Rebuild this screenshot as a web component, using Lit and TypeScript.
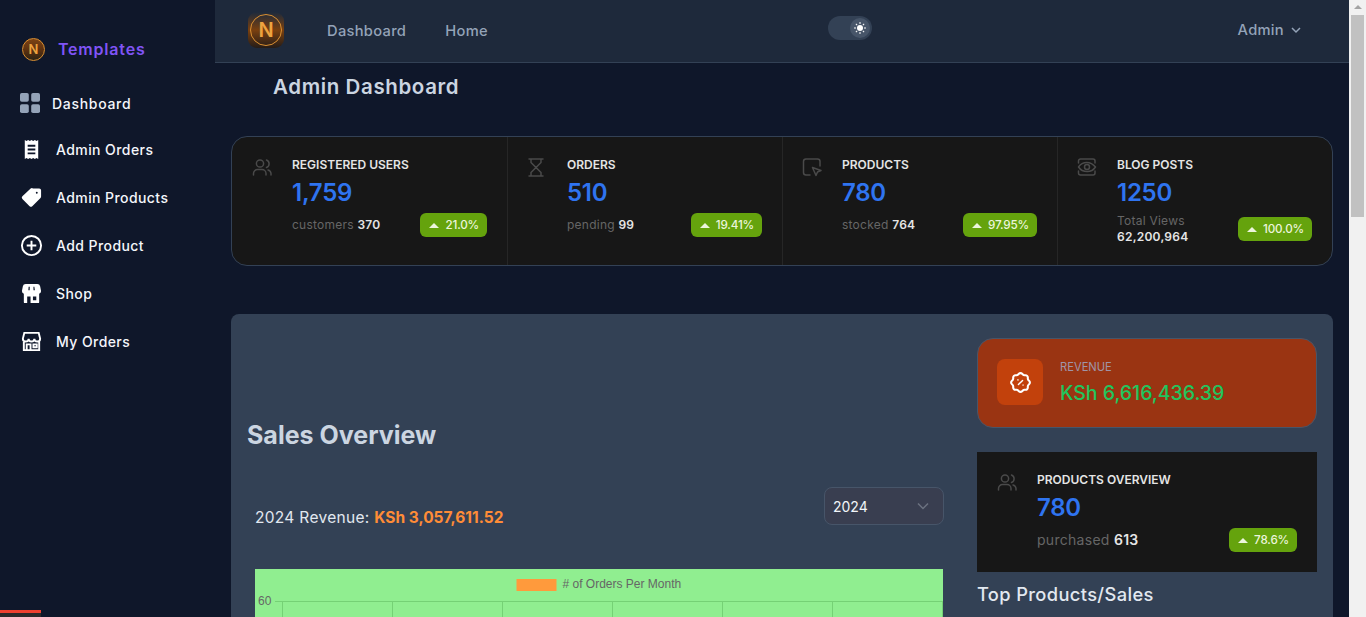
import { LitElement, css, html, svg } from 'lit';
import { customElement } from 'lit/decorators.js';

const icons = {
  grid: svg`<rect x="0" y="0" width="8.800" height="8.800" rx="1.800"/><rect x="11.200" y="0" width="8.800" height="8.800" rx="1.800"/><rect x="0" y="11.200" width="8.800" height="8.800" rx="1.800"/><rect x="11.200" y="11.200" width="8.800" height="8.800" rx="1.800"/>`,
  users: svg`<circle cx="10" cy="7.500" r="3.600"/><path d="M3.500 19v-1.500a4 4 0 0 1 4-4h4.500a4 4 0 0 1 4 4V19"/><path d="M16.500 4a4 4 0 0 1 0 7.500"/><path d="M21 19v-1.500a4 4 0 0 0-3-3.500"/>`,
  hourglass: svg`<path d="M4 3h14M4 20h14M6 3v3.500l5 5-5 5V20M16 3v3.500l-5 5 5 5V20"/>`,
  cursor: svg`<path d="M10 19H6a2.500 2.500 0 0 1-2.500-2.500V5.500A2.500 2.500 0 0 1 6 3h11.500A2.500 2.500 0 0 1 20 5.500V10"/><path d="M12.500 11.500l8.500 3-3.500 1.500-1.500 3.500z"/>`,
  eye: svg`<path d="M3.500 7V5a2 2 0 0 1 2-2h12.500a2 2 0 0 1 2 2v2M3.500 15v2a2 2 0 0 0 2 2h12.500a2 2 0 0 0 2-2v-2"/><path d="M3.500 11c2-3 4.800-4.500 8.250-4.500S18 8 20.500 11c-2 3-4.800 4.500-8.250 4.500S5.500 14 3.500 11z"/><circle cx="12" cy="11" r="2.500"/>`,
  rosette: svg`<path stroke-width="1.400" d="M10 14l4-4"/><circle stroke-width="1.400" cx="9.500" cy="9.500" r=".2"/><circle stroke-width="1.400" cx="14.500" cy="14.500" r=".2"/><path d="M5 7.200a2.200 2.200 0 0 1 2.200-2.200h1a2.200 2.200 0 0 0 1.550-.640l.700-.700a2.200 2.200 0 0 1 3.120 0l.700.700c.412.410.970.640 1.550.640h1a2.200 2.200 0 0 1 2.200 2.200v1c0 .580.230 1.138.640 1.550l.700.700a2.200 2.200 0 0 1 0 3.120l-.700.700a2.200 2.200 0 0 0-.640 1.550v1a2.200 2.200 0 0 1-2.200 2.200h-1a2.200 2.200 0 0 0-1.550.640l-.700.700a2.200 2.200 0 0 1-3.120 0l-.700-.700a2.200 2.200 0 0 0-1.550-.640h-1a2.200 2.200 0 0 1-2.200-2.200v-1a2.200 2.200 0 0 0-.640-1.550l-.700-.700a2.200 2.200 0 0 1 0-3.120l.700-.700a2.200 2.200 0 0 0 .640-1.550v-1"/>`,
};

const menu = [
  { label: 'Admin Orders', h: 46, icon: svg`<path fill="#fff" fill-rule="evenodd" d="M5 2l1.750 1.200L8.500 2l1.750 1.200L12 2l1.750 1.200L15.500 2l1.750 1.200L19 2v20l-1.750-1.200L15.500 22l-1.750-1.200L12 22l-1.750-1.200L8.500 22l-1.750-1.200L5 22V2zm3 5v2h8V7H8zm0 4v2h8v-2H8zm0 4v2h8v-2H8z"/>` },
  { label: 'Admin Products', h: 50, icon: svg`<path fill="#fff" fill-rule="evenodd" d="M13.500 2.500h6.500a2 2 0 0 1 2 2v6.500a2 2 0 0 1-.6 1.400l-8.600 8.600a2 2 0 0 1-2.800 0l-7.500-7.500a2 2 0 0 1 0-2.800l8.600-8.100a2 2 0 0 1 1.400-.600zM17.500 6a1 1 0 1 0 0 2 1 1 0 0 0 0-2z"/>` },
  { label: 'Add Product', h: 46, icon: svg`<circle cx="12" cy="12" r="10" fill="none" stroke="#fff" stroke-width="2"/><path d="M12 7v10M7 12h10" fill="none" stroke="#fff" stroke-width="2"/>` },
  { label: 'Shop', h: 50, icon: svg`<path fill="#fff" fill-rule="evenodd" d="M6 2h12a3 3 0 0 1 3 2.500l1 5a3 3 0 0 1-2 2.800V21a1 1 0 0 1-1 1H5a1 1 0 0 1-1-1v-8.700a3 3 0 0 1-2-2.800l1-5A3 3 0 0 1 6 2zm3 3l-.3 3.500h1.400L10.200 5H9zm5 0l.1 3.500h1.400L15 5h-1zM13.500 15v4H17v-4h-3.500zM7.500 15v7H11v-7H7.500z"/>` },
  { label: 'My Orders', h: 46, icon: svg`<path fill="none" stroke="#fff" stroke-width="2" d="M3 21h18M4 21V11M20 21V11M3 9l1.500-6h15L21 9a3 3 0 0 1-6 0 3 3 0 0 1-6 0 3 3 0 0 1-6 0zM7 21v-6h4v6M14 15h3.500v3H14z"/>` },
];

const stats = [
  { icon: icons.users, title: 'REGISTERED USERS', value: '1,759', desc: 'customers', count: '370', pct: '21.0%' },
  { icon: icons.hourglass, title: 'ORDERS', value: '510', desc: 'pending', count: '99', pct: '19.41%' },
  { icon: icons.cursor, title: 'PRODUCTS', value: '780', desc: 'stocked', count: '764', pct: '97.95%' },
  { icon: icons.eye, title: 'BLOG POSTS', value: '1250', desc: 'Total Views', count: '62,200,964', pct: '100.0%', stacked: true },
];

const gridXs = [27.5, 137.5, 247.5, 357.5, 467.5, 577.5, 687.5];

@customElement('app-root')
export class AppRoot extends LitElement {
  static styles = css`
    :host {
      display: flex;
      height: 100vh;
      overflow: hidden;
      font-family: Inter, 'Open Sans', sans-serif;
      color: #fff;
    }

    .page {
      display: flex;
      flex: 1;
      min-width: 0;
      background: #0f172a;
    }

    .rail {
      flex: 0 0 17px;
      background: #f1f1f1;
    }

    .rail-arrow {
      width: 0;
      height: 0;
      margin: 5px auto 6px;
      border-left: 4.500px solid transparent;
      border-right: 4.500px solid transparent;
      border-bottom: 4px solid #a3a3a3;
    }

    .rail-thumb {
      width: 13px;
      height: 202px;
      margin: 0 auto;
      background: #c1c1c1;
    }

    aside {
      position: relative;
      flex: 0 0 215px;
      background: #0f172a;
    }

    .brand {
      display: flex;
      align-items: center;
      gap: 13px;
      padding: 37px 0 0 22px;
      height: 24px;
      font-size: 16px;
      font-weight: 600;
      letter-spacing: 0.05em;
      color: #8054f5;
    }

    .coin {
      display: flex;
      align-items: center;
      justify-content: center;
      flex: none;
      box-sizing: border-box;
      border-radius: 50%;
      border: 1px solid #d98f32;
      background: linear-gradient(#7d4314, #5a3010 55%, #2e2414);
      color: #eda33f;
      font-weight: 600;
      letter-spacing: 0;
    }

    .coin.small {
      width: 23px;
      height: 23px;
      font-size: 13px;
    }

    .side-dash {
      display: flex;
      align-items: center;
      gap: 12px;
      margin: 30px 0 0 20px;
      height: 24px;
      font-size: 14px;
      font-weight: 500;
      letter-spacing: 0.05em;
      color: #f4f6fb;
    }

    .side-dash svg {
      fill: #94a3b8;
    }

    .side-list {
      margin: 11px 0 0;
      padding: 0;
      list-style: none;
    }

    .side-list li {
      display: flex;
      align-items: center;
      gap: 13px;
      padding-left: 20px;
      font-size: 14px;
      font-weight: 500;
      letter-spacing: 0.03em;
      color: #f4f6fb;
    }

    .toast-bar {
      position: absolute;
      left: 0;
      bottom: 0;
      width: 41px;
      height: 7px;
      background: #2b2b2b;
      border-top: 3px solid #ef4130;
      box-sizing: border-box;
    }

    main {
      flex: 1;
      min-width: 0;
    }

    .topbar {
      display: flex;
      align-items: center;
      box-sizing: border-box;
      height: 63px;
      padding: 0 33px;
      background: #1e293b;
      border-bottom: 1px solid #334155;
    }

    .logo-tile {
      display: flex;
      align-items: center;
      justify-content: center;
      width: 36px;
      height: 36px;
      border-radius: 9px;
      background: linear-gradient(#1d2a3c, #7a400f 50%, #241c18);
      margin-bottom: 3px;
    }

    .coin.large {
      width: 32px;
      height: 32px;
      background: none;
      font-size: 20px;
    }

    .nav {
      display: flex;
      gap: 39px;
      margin: 0 0 0 43px;
      font-size: 14.700px;
      font-weight: 500;
      letter-spacing: 0.02em;
      color: #94a3b8;
    }

    .toggle {
      position: relative;
      width: 44px;
      height: 24px;
      margin: 0 0 6px 340px;
      border-radius: 12px;
      background: #334155;
    }

    .knob {
      position: absolute;
      top: 2px;
      right: 2px;
      display: flex;
      align-items: center;
      justify-content: center;
      width: 20px;
      height: 20px;
      border-radius: 50%;
      background: #475569;
      color: #fff;
    }

    .account {
      display: flex;
      align-items: center;
      gap: 7px;
      margin: 0 15px 3px auto;
      font-size: 14.700px;
      font-weight: 500;
      letter-spacing: 0.02em;
      color: #94a3b8;
    }

    .page-title {
      margin: 0;
      padding: 10px 0 0 58px;
      height: 30px;
      font-size: 20.500px;
      line-height: 28px;
      font-weight: 600;
      letter-spacing: 0.03em;
      color: #cbd5e1;
    }

    .content {
      padding: 33px 16px 0;
    }

    .stats {
      display: grid;
      grid-template-columns: repeat(4, 1fr);
      height: 130px;
      box-sizing: border-box;
      border: 1px solid #334155;
      border-radius: 16px;
      background: #171717;
      overflow: hidden;
    }

    .stat {
      display: flex;
      gap: 16px;
      box-sizing: border-box;
      padding: 20px 20px 0 19px;
      border-left: 1px solid #262626;
    }

    .stat:first-child {
      padding-left: 20px;
      border-left: 0;
    }

    .stat-icon {
      flex: none;
      width: 24px;
      height: 24px;
      margin: -1px 2px 0 -2px;
      fill: none;
      stroke: #4a4a4a;
      stroke-width: 1.500;
      stroke-linecap: round;
      stroke-linejoin: round;
    }

    .stat-body {
      flex: 1;
      min-width: 0;
    }

    .stat-title {
      font-size: 12px;
      line-height: 16px;
      font-weight: 600;
      color: #e5e5e5;
    }

    .stat-value {
      margin-top: 4px;
      font-size: 24px;
      line-height: 32px;
      font-weight: 600;
      letter-spacing: -0.01em;
      color: #2f74f0;
    }

    .stat-row {
      display: flex;
      align-items: center;
      justify-content: space-between;
      margin-top: 4px;
    }

    .stat-desc {
      font-size: 12px;
      line-height: 16px;
      letter-spacing: 0.02em;
      color: #666;
    }

    .stat-desc b {
      font-weight: 600;
      color: #e5e5e5;
    }

    .stat-desc b.own-line {
      display: block;
    }

    .badge {
      display: inline-flex;
      align-items: center;
      gap: 6px;
      height: 24px;
      padding: 0 8px 0 9px;
      border-radius: 6px;
      background: #65a30d;
      font-size: 11.700px;
      font-weight: 500;
      letter-spacing: -0.015em;
      color: #ecf5dc;
    }

    .badge i {
      width: 0;
      height: 0;
      border-left: 5px solid transparent;
      border-right: 5px solid transparent;
      border-bottom: 5px solid #ecf5dc;
    }

    .panel {
      display: grid;
      grid-template-columns: 714px 340px;
      gap: 16px;
      margin-top: 48px;
      padding: 24px 16px;
      border-radius: 8px;
      background: #334155;
    }

    .sales h2 {
      margin: 81px 0 0;
      font-size: 25px;
      line-height: 32px;
      font-weight: 700;
      color: #cbd5e1;
    }

    .sales-head {
      display: flex;
      align-items: flex-start;
      justify-content: space-between;
      margin: 36px 17px 0 8px;
    }

    .sales-total {
      padding-top: 19px;
      font-size: 15.500px;
      line-height: 24px;
      letter-spacing: 0.02em;
      color: #e2e8f0;
    }

    .sales-total b {
      font-weight: 700;
      letter-spacing: 0;
      color: #ff8c37;
    }

    .year {
      display: flex;
      align-items: center;
      justify-content: space-between;
      box-sizing: border-box;
      width: 120px;
      height: 38px;
      padding: 0 13px 0 8px;
      border: 1px solid #475569;
      border-radius: 8px;
      background: #393e50;
      font-size: 14px;
      color: #f1f5f9;
    }

    .chart {
      display: block;
      margin: 39px 0 0 8px;
      background: #90ee90;
    }

    .chart text {
      font-family: 'Liberation Sans', Arial, sans-serif;
      font-size: 12px;
      fill: #666;
    }

    .revenue {
      display: flex;
      align-items: center;
      gap: 17px;
      box-sizing: border-box;
      height: 90px;
      padding: 0 19px 2px;
      border: 1px solid #475569;
      border-radius: 16px;
      background: #9a3412;
    }

    .revenue-tile {
      display: flex;
      align-items: center;
      justify-content: center;
      width: 46px;
      height: 46px;
      border-radius: 8px;
      background: #c2410c;
      color: #fff;
    }

    .revenue-text {
      padding-top: 2px;
    }

    .revenue-label {
      font-size: 11.200px;
      line-height: 16px;
      color: #a094a8;
    }

    .revenue-value {
      margin-top: 4px;
      font-size: 19.500px;
      line-height: 28px;
      font-weight: 500;
      color: #22c55e;
    }

    .overview {
      display: flex;
      gap: 16px;
      box-sizing: border-box;
      height: 120px;
      margin-top: 24px;
      padding: 20px 20px 0;
      background: #171717;
    }

    .overview .stat-desc {
      font-size: 14px;
    }

    .top-title {
      margin: 10px 0 0;
      font-size: 18.300px;
      line-height: 24px;
      font-weight: 500;
      letter-spacing: 0.02em;
      color: #e2e8f0;
    }
  `;

  private renderStat(s: (typeof stats)[number]) {
    return html`
      <div class="stat">
        <svg class="stat-icon" viewBox="0 0 24 24">${s.icon}</svg>
        <div class="stat-body">
          <div class="stat-title">${s.title}</div>
          <div class="stat-value">${s.value}</div>
          <div class="stat-row">
            <span class="stat-desc">
              ${s.desc} <b class=${s.stacked ? 'own-line' : ''}>${s.count}</b>
            </span>
            <span class="badge"><i></i>${s.pct}</span>
          </div>
        </div>
      </div>
    `;
  }

  render() {
    return html`
      <div class="page">
        <aside>
          <div class="brand"><span class="coin small">N</span>Templates</div>
          <div class="side-dash">
            <svg width="20" height="20" viewBox="0 0 20 20">${icons.grid}</svg>
            Dashboard
          </div>
          <ul class="side-list">
            ${menu.map(
              (m) => html`
                <li style="height:${m.h}px">
                  <svg width="23" height="23" viewBox="0 0 24 24">${m.icon}</svg>
                  ${m.label}
                </li>
              `,
            )}
          </ul>
          <div class="toast-bar"></div>
        </aside>

        <main>
          <header class="topbar">
            <div class="logo-tile"><span class="coin large">N</span></div>
            <div class="nav"><span>Dashboard</span><span>Home</span></div>
            <div class="toggle">
              <span class="knob">
                <svg width="12" height="12" viewBox="0 0 12 12" fill="currentColor">
                  <circle cx="6" cy="6" r="3" />
                  <path d="M5.500 0h1v2h-1zM5.500 10h1v2h-1zM0 5.500h2v1H0zM10 5.500h2v1h-2zM1.500 2.200l.7-.7 1.300 1.300-.7.7zM8.500 9.200l.7-.7 1.300 1.300-.7.7zM1.500 9.800l1.300-1.300.7.7-1.300 1.300zM8.500 2.800l1.300-1.300.7.7-1.300 1.300z" />
                </svg>
              </span>
            </div>
            <div class="account">
              Admin
              <svg width="10" height="10" viewBox="0 0 10 10" fill="none" stroke="currentColor" stroke-width="1.500"><path d="M1 3l4 4 4-4" /></svg>
            </div>
          </header>

          <h1 class="page-title">Admin Dashboard</h1>

          <div class="content">
            <section class="stats">${stats.map((s) => this.renderStat(s))}</section>

            <section class="panel">
              <div class="sales">
                <h2>Sales Overview</h2>
                <div class="sales-head">
                  <div class="sales-total">2024 Revenue: <b>KSh 3,057,611.52</b></div>
                  <div class="year">
                    2024
                    <svg width="14" height="14" viewBox="0 0 14 14" fill="none" stroke="#6b7280" stroke-width="1.500"><path d="M2 4.500l5 5 5-5" /></svg>
                  </div>
                </div>
                <svg class="chart" width="688" height="344" viewBox="0 0 688 344">
                  <rect x="261.500" y="10" width="40" height="12" fill="#ff9a3c" />
                  <text x="307.500" y="19">${'# of Orders Per Month'}</text>
                  <text x="3" y="36">60</text>
                  <path d="M20 32.500H688" stroke="#75d175" />
                  ${gridXs.map((x) => svg`<path d="M${x} 32V344" stroke="#75d175" />`)}
                </svg>
              </div>

              <div class="side-col">
                <div class="revenue">
                  <div class="revenue-tile">
                    <svg width="25" height="25" viewBox="0 0 24 24" fill="none" stroke="currentColor" stroke-width="2" stroke-linecap="round" stroke-linejoin="round">${icons.rosette}</svg>
                  </div>
                  <div class="revenue-text">
                    <div class="revenue-label">REVENUE</div>
                    <div class="revenue-value">KSh 6,616,436.39</div>
                  </div>
                </div>

                <div class="overview">
                  <svg class="stat-icon" viewBox="0 0 24 24">${icons.users}</svg>
                  <div class="stat-body">
                    <div class="stat-title">PRODUCTS OVERVIEW</div>
                    <div class="stat-value">780</div>
                    <div class="stat-row">
                      <span class="stat-desc">purchased <b>613</b></span>
                      <span class="badge"><i></i>78.6%</span>
                    </div>
                  </div>
                </div>

                <h3 class="top-title">Top Products/Sales</h3>
              </div>
            </section>
          </div>
        </main>
      </div>
      <div class="rail">
        <div class="rail-arrow"></div>
        <div class="rail-thumb"></div>
      </div>
    `;
  }
}
